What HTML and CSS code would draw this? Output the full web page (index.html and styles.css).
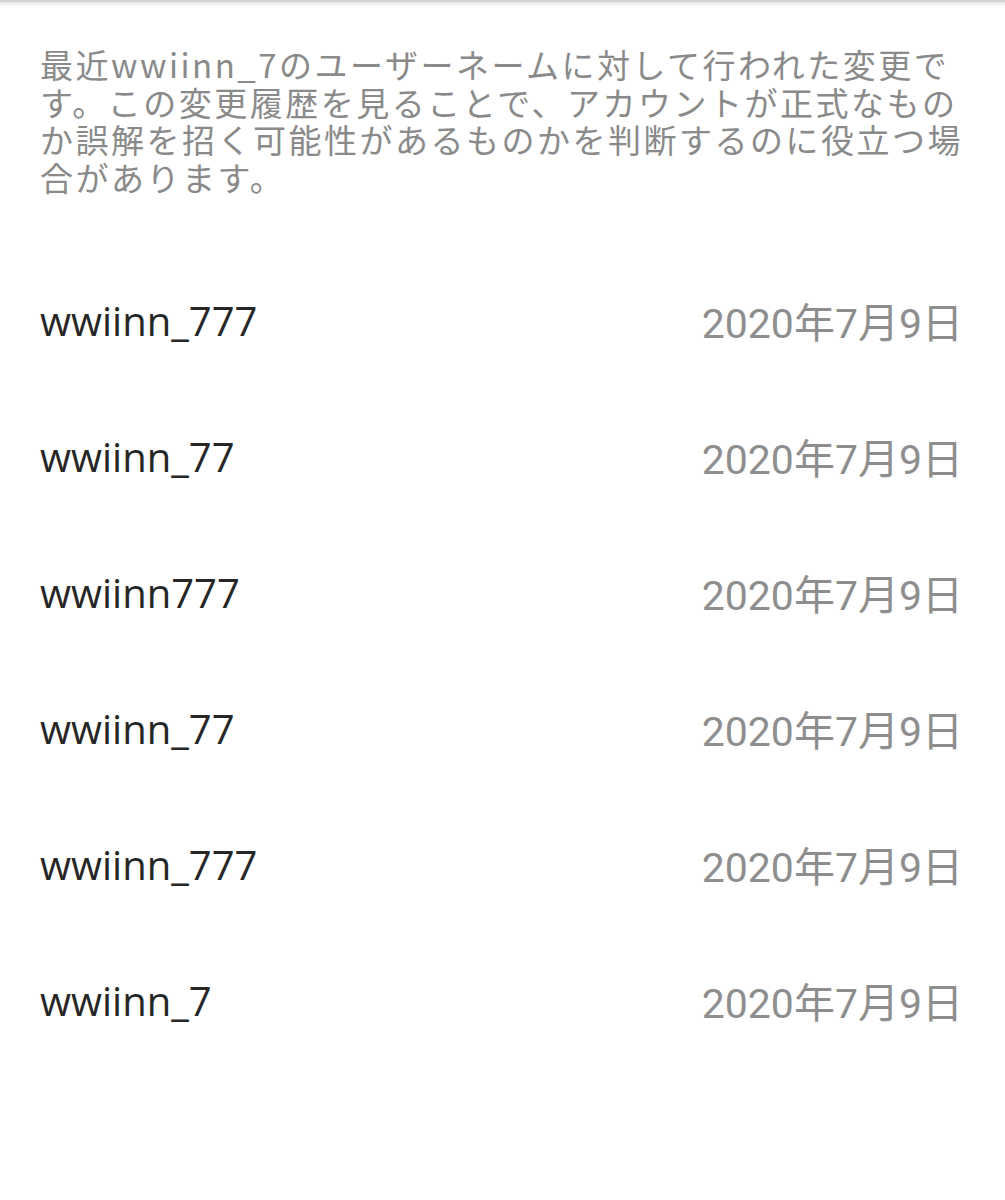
FILE: index.html
```html
<!DOCTYPE html>
<html lang="ja">
<head>
    <meta charset="UTF-8">
    <meta name="viewport" content="width=device-width, initial-scale=1.0">
    <title>以前のユーザーネーム</title>
    <link rel="stylesheet" href="styles.css">
</head>
<body>
    <div class="topbar"></div>
    <main class="page">
        <p class="intro">最近wwiinn_7のユーザーネームに対して行われた変更です。この変更履歴を見ることで、アカウントが正式なものか誤解を招く可能性があるものかを判断するのに役立つ場合があります。</p>

        <ul class="history">
            <li class="row"><span class="name">wwiinn_777</span><span class="date">2020年7月9日</span></li>
            <li class="row"><span class="name">wwiinn_77</span><span class="date">2020年7月9日</span></li>
            <li class="row"><span class="name">wwiinn777</span><span class="date">2020年7月9日</span></li>
            <li class="row"><span class="name">wwiinn_77</span><span class="date">2020年7月9日</span></li>
            <li class="row"><span class="name">wwiinn_777</span><span class="date">2020年7月9日</span></li>
            <li class="row"><span class="name">wwiinn_7</span><span class="date">2020年7月9日</span></li>
        </ul>
    </main>
</body>
</html>
```

FILE: styles.css
```css
body {
    margin: 0;
    padding: 0;
    background-color: #fff;
    font-family: "Open Sans", "Noto Sans CJK JP", sans-serif;
}
.topbar {
    height: 5px;
    border-top: 2px solid #d2d2d2;
    background: linear-gradient(#e6e6e6, #fff);
}
.page {
    padding: 0 40px;
}
.intro {
    margin: 39px 0 0;
    font-family: "Noto Sans CJK JP", sans-serif;
    font-size: 33px;
    line-height: 37.5px;
    letter-spacing: 2.5px;
    color: #8a8a8a;
}
.history {
    list-style: none;
    margin: 56px 0 0;
    padding: 0;
}
.row {
    height: 136px;
    display: flex;
    align-items: center;
    justify-content: space-between;
}
.name {
    font-size: 40px;
    color: #262626;
}
.date {
    font-family: Roboto, "Noto Sans CJK JP", sans-serif;
    font-size: 41px;
    color: #8e8e8e;
    margin-right: 2px;
}
```
